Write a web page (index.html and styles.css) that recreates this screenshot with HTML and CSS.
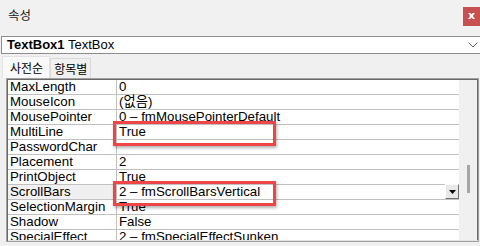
FILE: index.html
```html
<!DOCTYPE html>
<html lang="ko">
<head>
<meta charset="utf-8">
<link rel="stylesheet" href="styles.css">
</head>
<body>
<div class="window">
  <div class="titlebar">
    <span class="title">속성</span>
    <span class="close">x</span>
  </div>
  <div class="combo">
    <span class="obj"><b>TextBox1</b> TextBox</span>
    <svg class="chev" width="10" height="6" viewBox="0 0 10 6"><path d="M0.5 0.5 L5 5 L9.5 0.5" fill="none" stroke="#606060" stroke-width="1"/></svg>
  </div>
  <div class="tabs">
    <span class="tab active">사전순</span>
    <span class="tab">항목별</span>
  </div>
  <div class="grid">
    <div class="rows">
      <div class="row"><span class="name">MaxLength</span><span class="val">0</span></div>
      <div class="row"><span class="name">MouseIcon</span><span class="val">(없음)</span></div>
      <div class="row"><span class="name">MousePointer</span><span class="val">0 – fmMousePointerDefault</span></div>
      <div class="row"><span class="name">MultiLine</span><span class="val">True</span></div>
      <div class="row"><span class="name">PasswordChar</span><span class="val"></span></div>
      <div class="row"><span class="name">Placement</span><span class="val">2</span></div>
      <div class="row"><span class="name">PrintObject</span><span class="val">True</span></div>
      <div class="row sel"><span class="name">ScrollBars</span><span class="val">2 – fmScrollBarsVertical<span class="ddbtn"><svg width="7" height="4" viewBox="0 0 7 4"><path d="M0 0 H7 L3.5 4 Z" fill="#000"/></svg></span></span></div>
      <div class="row"><span class="name">SelectionMargin</span><span class="val">True</span></div>
      <div class="row"><span class="name">Shadow</span><span class="val">False</span></div>
      <div class="row"><span class="name">SpecialEffect</span><span class="val">2 – fmSpecialEffectSunken</span></div>
    </div>
    <div class="scroll"><span class="thumb"></span></div>
    <div class="mark mark1"></div>
    <div class="mark mark2"></div>
  </div>
</div>
</body>
</html>
```
FILE: styles.css
```css
html, body {
  margin: 0;
  padding: 0;
}
body {
  width: 480px;
  height: 246px;
  overflow: hidden;
  background: #f0f0f0;
  font-family: "Liberation Sans", "Noto Sans CJK KR", sans-serif;
  font-size: 13px;
  color: #000;
}
.window {
  display: flex;
  flex-direction: column;
}
.titlebar {
  height: 36px;
  display: flex;
  justify-content: space-between;
  align-items: flex-start;
  background: #f1f1f1;
}
.title {
  font-family: "Noto Sans CJK KR", sans-serif;
  font-size: 12.5px;
  color: #222;
  margin: 6px 0 0 8px;
  line-height: 18px;
}
.close {
  margin-top: 7px;
  width: 17px;
  height: 19px;
  background: #c75050;
  color: #fff;
  font-weight: bold;
  font-size: 11px;
  line-height: 18px;
  text-align: center;
  font-family: "DejaVu Sans", sans-serif;
}
.combo {
  height: 16px;
  margin-left: 1px;
  margin-right: -4px;
  border: 1px solid #8c8c8c;
  border-right: none;
  background: #fff;
  display: flex;
  align-items: center;
  justify-content: space-between;
  padding-right: 8px;
}
.obj {
  padding-left: 5px;
  line-height: 16px;
}
.chev {
  margin-right: -2px;
}
.tabs {
  height: 24px;
  display: flex;
  align-items: flex-end;
  padding-left: 2px;
}
.tab {
  font-family: "Noto Sans CJK KR", sans-serif;
  font-size: 12px;
  height: 19px;
  line-height: 19px;
  padding: 0 3px 0 3px;
  border: 1px solid #d9d9d9;
  border-bottom: none;
  background: #f0f0f0;
}
.tab.active {
  height: 21px;
  line-height: 21px;
  background: #f9f9f9;
  padding: 0 6px 0 7px;
  border-color: #e3e3e3;
}
.grid {
  position: relative;
  height: 160px;
  margin: 0 1px 0 6px;
  border: 1px solid #a0a0a0;
  box-shadow: inset 1px 1px 0 #696969, inset -1px -1px 0 #e3e3e3;
  padding: 1px 0 1px 1px;
  display: flex;
  overflow: hidden;
}
.rows {
  flex: 1;
  background: #fff;
  overflow: hidden;
  font-size: 13.3px;
}
.row {
  display: flex;
  height: 14px;
  line-height: 14px;
  border-bottom: 1px solid #c0c0c0;
  white-space: nowrap;
}
.name {
  width: 106px;
  padding-left: 2px;
  border-right: 1px solid #c0c0c0;
}
.row.sel .name {
  background: #f0f0f0;
}
.val {
  flex: 1;
  position: relative;
  padding-left: 2px;
}
.ddbtn {
  position: absolute;
  right: 0;
  top: -1px;
  width: 14px;
  height: 15px;
  background: #e8e8e8;
  border: 1px solid #fff;
  border-right-color: #707070;
  border-bottom-color: #707070;
  box-sizing: border-box;
  display: flex;
  align-items: center;
  justify-content: center;
}
.scroll {
  width: 18px;
  background: #f0f0f0;
  position: relative;
  border-right: 1px solid #696969;
}
.thumb {
  position: absolute;
  left: 8px;
  top: 85px;
  width: 3px;
  height: 28px;
  background: #a6a6a6;
}
.mark {
  position: absolute;
  border: 3px solid #ee4646;
  box-shadow: 1px 2px 3px rgba(0, 0, 0, 0.3);
  width: 157px;
  height: 19px;
}
.mark1 {
  left: 106px;
  top: 42px;
}
.mark2 {
  left: 106px;
  top: 102px;
}
```
